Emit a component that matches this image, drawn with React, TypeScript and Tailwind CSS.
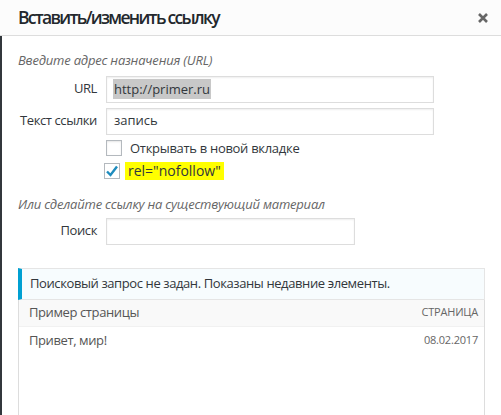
const font = { fontFamily: '"Open Sans", "Noto Sans", sans-serif' }

function Field({ label, value, selected, width }: { label: string; value?: string; selected?: boolean; width: string }) {
  return (
    <div className="flex items-center">
      <label className="w-[79px] text-right text-[13px] tracking-[-0.4px] text-[#32373c]">{label}</label>
      <div className={`ml-[9px] h-[27px] ${width} border border-[#ddd] shadow-[inset_0_1px_2px_rgba(0,0,0,0.07)] flex items-center px-[6px] text-[13px] text-[#32373c]`}>
        {value && <span className={selected ? 'bg-[#c8c8c8] px-[1px] leading-[20px]' : 'px-[1px]'}>{value}</span>}
      </div>
    </div>
  )
}

export default function App() {
  return (
    <div className="w-[501px] h-[415px] bg-white overflow-hidden flex flex-col" style={font}>
      {/* шапка диалога */}
      <div className="h-[36px] shrink-0 bg-[#fcfcfc] border-b border-[#ddd] flex items-center justify-between pl-[18px] pr-[13px]">
        <h1 className="text-[17.5px] font-semibold tracking-[-1.7px] text-[#23282d] leading-none">Вставить/изменить ссылку</h1>
        <svg width="10" height="10" viewBox="0 0 10 10">
          <path d="M1 1 L9 9 M9 1 L1 9" stroke="#666" strokeWidth="2.6" />
        </svg>
      </div>

      <div className="flex flex-1 min-h-0">
        <div className="w-[2px] bg-[#32373c] shrink-0" />
        <div className="flex-1 flex flex-col pl-[16px]">
          <p className="mt-[15px] text-[13px] italic tracking-[-0.2px] text-[#666]">Введите адрес назначения (URL)</p>
          <div className="mt-[5px] flex flex-col gap-[5px]">
            <Field label="URL" value="http://primer.ru" selected width="w-[328px]" />
            <Field label="Текст ссылки" value="запись" width="w-[328px]" />
          </div>
          <div className="mt-[4px] ml-[88px] flex items-center gap-[8px] text-[13px] tracking-[-0.3px] text-[#32373c]">
            <span className="w-[16px] h-[16px] border border-[#b4b9be] bg-white shadow-[inset_0_1px_2px_rgba(0,0,0,0.1)]" />
            <span>Открывать в новой вкладке</span>
          </div>
          <div className="mt-[4px] ml-[86px] flex items-center gap-[5px] text-[13px] text-[#32373c]">
            <span className="w-[16px] h-[16px] border border-[#b4b9be] bg-white flex items-center justify-center">
              <svg width="14" height="14" viewBox="0 0 14 14">
                <path d="M2 7.5 L5.5 11 L12 2.5" fill="none" stroke="#1e8cbe" strokeWidth="2.4" />
              </svg>
            </span>
            <span className="bg-[#ffff00] px-[3px] text-[14px] leading-[18px]">rel="nofollow"</span>
          </div>

          <p className="mt-[15px] text-[13px] italic tracking-[-0.2px] text-[#666]">Или сделайте ссылку на существующий материал</p>
          <div className="mt-[3px]">
            <Field label="Поиск" width="w-[249px]" />
          </div>

          {/* результаты поиска */}
          <div className="mt-[23px] w-[467px] flex-1 flex flex-col border-x border-[#ddd] text-[13px] tracking-[-0.4px]">
            <div className="h-[32px] shrink-0 flex items-center bg-[#f7fcfe] border border-[#e5e5e5] border-l-4 border-l-[#00a0d2] -mx-[1px] pl-[8px] text-[#32373c]">
              Поисковый запрос не задан. Показаны недавние элементы.
            </div>
            <div className="h-[27px] shrink-0 flex items-center justify-between bg-[#f9f9f9] border-b border-[#f1f1f1] pl-[10px] pr-[6px] text-[#555]">
              <span>Пример страницы</span>
              <span className="text-[11px] uppercase tracking-[-0.2px] text-[#666]">Страница</span>
            </div>
            <div className="pt-[4px] flex items-center justify-between pl-[10px] pr-[6px] text-[#555]">
              <span>Привет, мир!</span>
              <span className="text-[11px] tracking-[-0.2px] text-[#666]">08.02.2017</span>
            </div>
          </div>
        </div>
      </div>
    </div>
  )
}
